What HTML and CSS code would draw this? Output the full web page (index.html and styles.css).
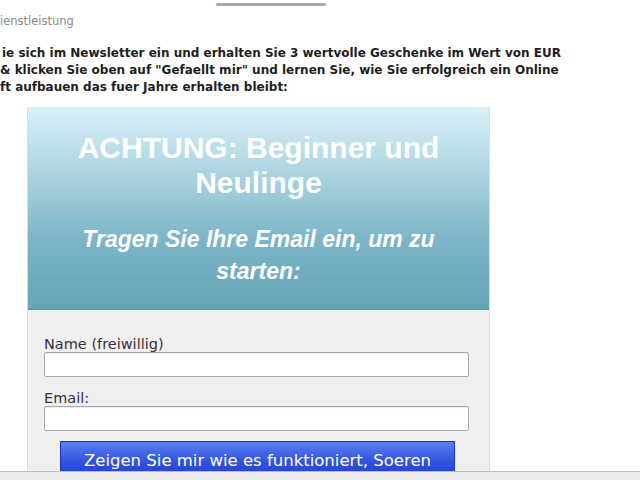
FILE: index.html
```html
<!DOCTYPE html>
<html lang="de">
    <head>
        <meta charset="UTF-8" />
        <meta name="viewport" content="width=device-width, initial-scale=1" />
        <title>Newsletter</title>
        <link rel="stylesheet" href="styles.css">
    </head>
    <body>

        <div class="topbar"><span class="tab-line"></span></div>
        <div class="crumb">ienstleistung</div>

        <p class="intro">
            ie sich im Newsletter ein und erhalten Sie 3 wertvolle Geschenke im Wert von EUR<br>
            &amp; klicken Sie oben auf "Gefaellt mir" und lernen Sie, wie Sie erfolgreich ein Online<br>
            ft aufbauen das fuer Jahre erhalten bleibt:
        </p>

        <div class="optin">
            <div class="optin-head">
                <h1>ACHTUNG: Beginner und Neulinge</h1>
                <h2>Tragen Sie Ihre Email ein, um zu starten:</h2>
            </div>
            <form class="optin-form">
                <label for="name">Name (freiwillig)</label>
                <input type="text" id="name" />
                <label for="email">Email:</label>
                <input type="email" id="email" />
                <button type="submit">Zeigen Sie mir wie es funktioniert, Soeren</button>
            </form>
        </div>

        <div class="statusbar"></div>

    </body>
</html>
```

FILE: styles.css
```css
* {
  box-sizing: border-box;
}
body {
  margin: 0;
  font-family: 'DejaVu Sans', Verdana, sans-serif;
  background: #fff;
  color: #222;
  overflow: hidden;
}
.topbar {
  height: 12px;
  padding-top: 3px;
}
.tab-line {
  display: block;
  margin-left: 216px;
  width: 110px;
  height: 3px;
  background: #a8a8a8;
  border-radius: 2px;
}
.crumb {
  font-size: 11.5px;
  color: #8a8a8a;
  line-height: 18px;
}
.intro {
  margin: 15px 0 0;
  text-indent: 2px;
  font-size: 12px;
  font-weight: bold;
  line-height: 17px;
  color: #1e1e1e;
  white-space: nowrap;
}
.optin {
  width: 463px;
  margin: 11px 0 0 27px;
  border-left: 1px solid #cfdfe4;
  border-right: 1px solid #dedede;
}
.optin-head {
  background: linear-gradient(180deg, #d9f0f7 0%, #a9d2df 35%, #7db6c8 65%, #65a3b7 100%);
  border-bottom: 2px solid #5d9aae;
  padding: 23px 10px 21px;
  text-align: center;
  color: #fff;
  font-family: 'Liberation Sans', Arial, sans-serif;
}
.optin-head h1 {
  margin: 0;
  font-size: 30px;
  line-height: 35px;
  font-weight: bold;
  padding: 0 20px;
}
.optin-head h2 {
  margin: 23px 0 0;
  font-size: 23px;
  line-height: 32px;
  font-style: italic;
  font-weight: bold;
  padding: 0 20px;
}
.optin-form {
  background: #efefef;
  padding: 26px 20px 20px 16px;
  display: flex;
  flex-direction: column;
}
.optin-form label {
  font-size: 14.5px;
  line-height: 16px;
  color: #3a3040;
}
.optin-form input {
  height: 25px;
  border: 1px solid #a9a9a9;
  border-radius: 2px;
  background: #fff;
  margin-bottom: 13px;
  box-shadow: inset 0 1px 1px rgba(0, 0, 0, 0.08);
}
.optin-form button {
  margin: -3px 14px 0 16px;
  height: 38px;
  padding: 0;
  background: linear-gradient(180deg, #5a7ff0 0%, #3556e0 50%, #1c3bd3 100%);
  border: 1px solid #1b36b8;
  color: #fff;
  font-family: 'DejaVu Sans', Verdana, sans-serif;
  font-size: 16.5px;
}
.statusbar {
  position: fixed;
  left: 0;
  right: 0;
  bottom: 0;
  height: 9px;
  background: #ececec;
  border-top: 1px solid #bdbdbd;
}
```
